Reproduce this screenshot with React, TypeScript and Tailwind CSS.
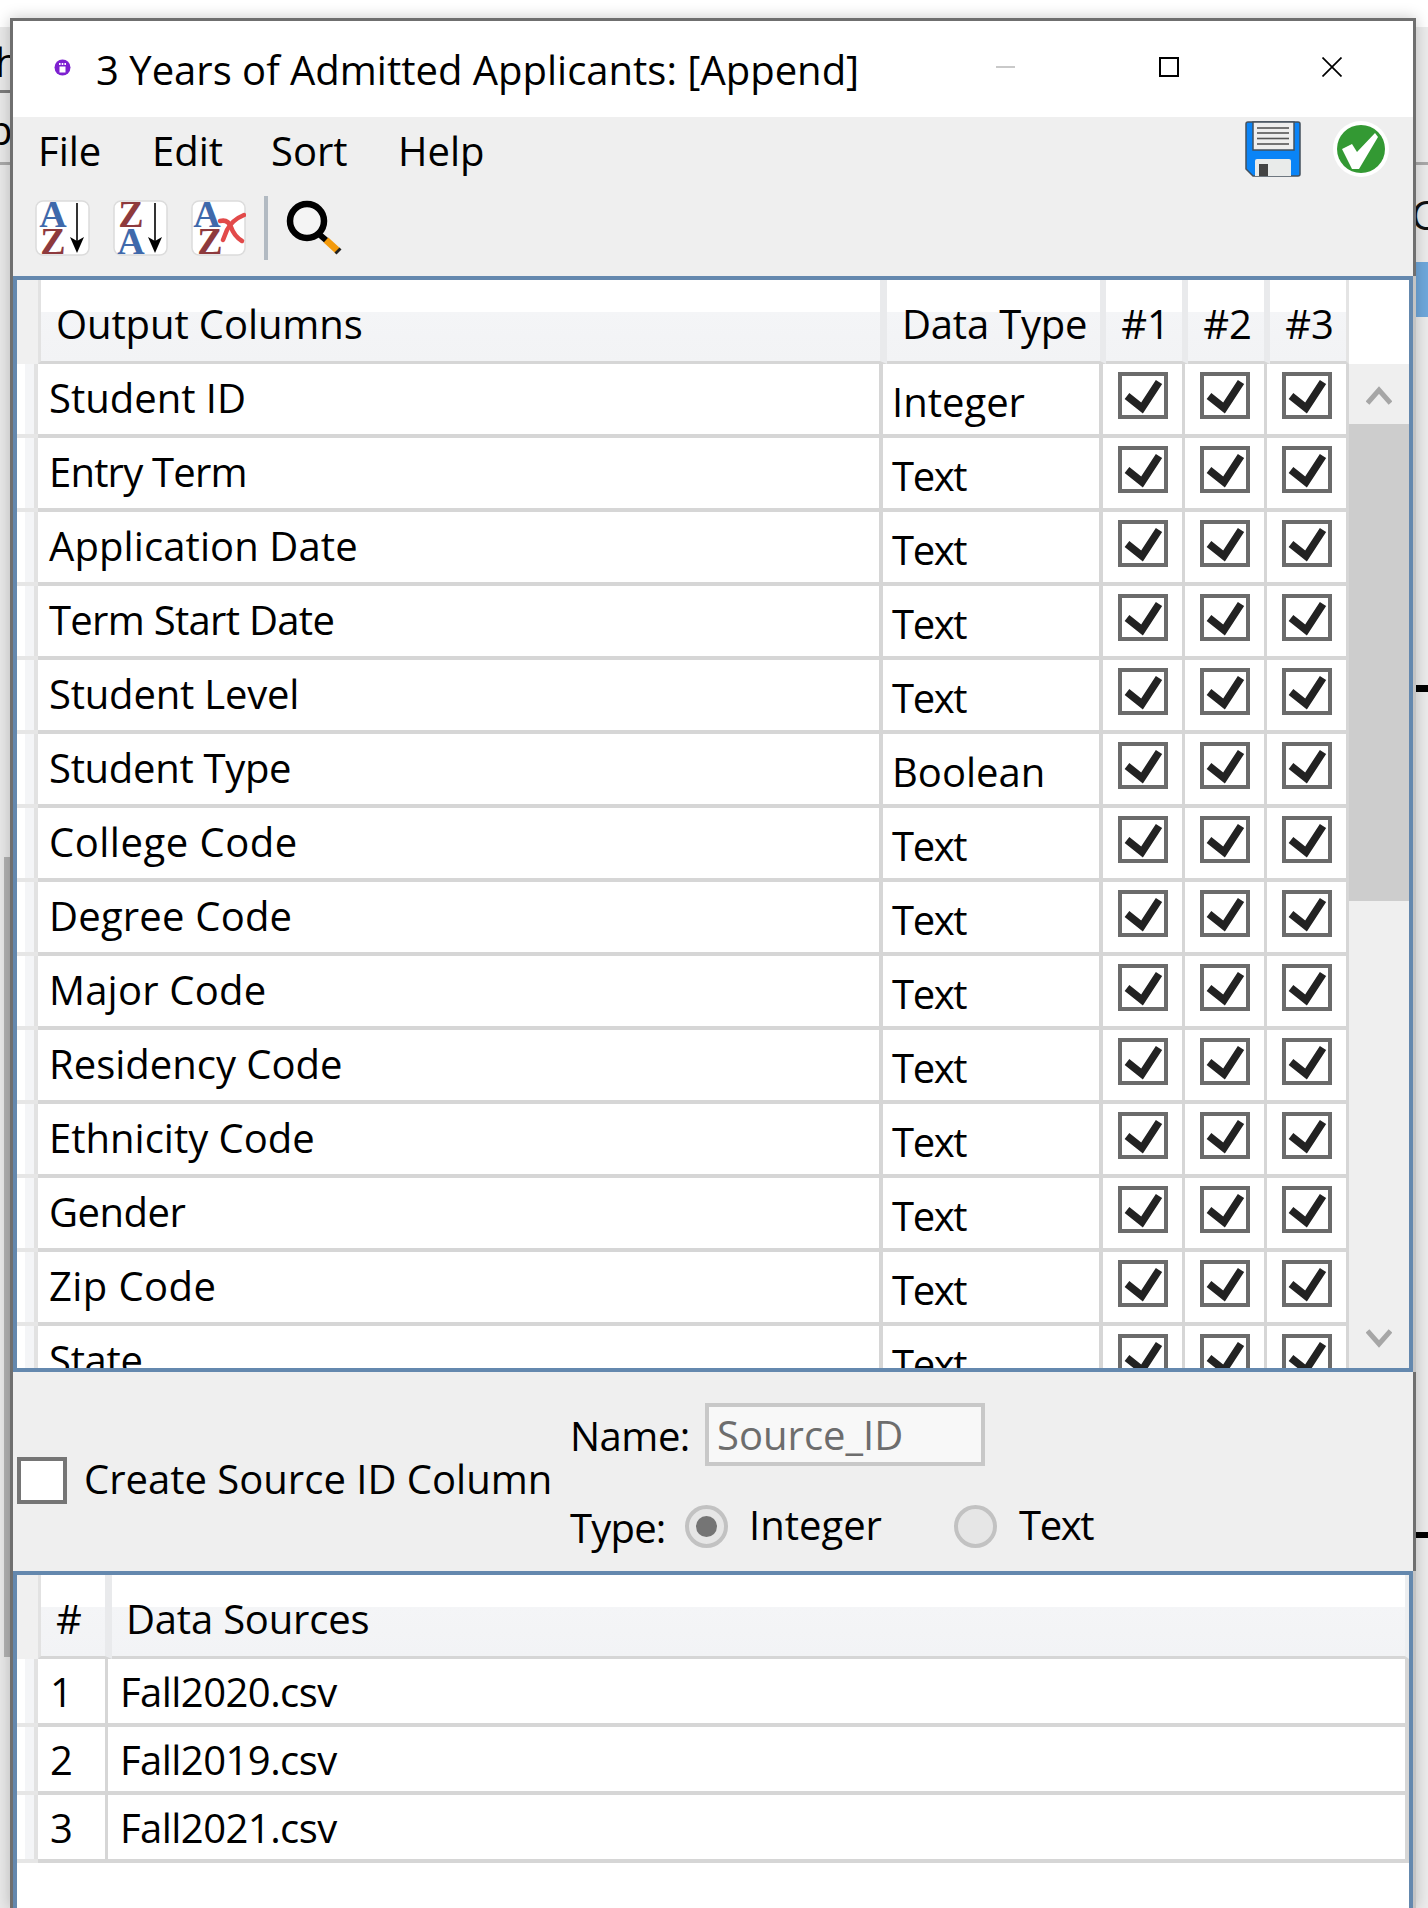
import React from "react";

const columns: [string, string, string][] = [
  ["Student ID", "Integer", ""],
  ["Entry Term", "Text", "tracking-[-0.8px]"],
  ["Application Date", "Text", "tracking-[0.1px]"],
  ["Term Start Date", "Text", "tracking-[-0.7px]"],
  ["Student Level", "Text", "tracking-[-0.2px]"],
  ["Student Type", "Boolean", "tracking-[-0.3px]"],
  ["College Code", "Text", "tracking-[0.5px]"],
  ["Degree Code", "Text", "tracking-[0.2px]"],
  ["Major Code", "Text", "tracking-[0.2px]"],
  ["Residency Code", "Text", ""],
  ["Ethnicity Code", "Text", ""],
  ["Gender", "Text", "tracking-[-0.5px]"],
  ["Zip Code", "Text", "tracking-[0.4px]"],
  ["State", "Text", "tracking-[-0.3px]"],
];

const sources = ["Fall2020.csv", "Fall2019.csv", "Fall2021.csv"];

const fontClass = "font-['Open_Sans','Noto_Sans',sans-serif] text-[40px] leading-[48px]";

function Check() {
  return (
    <svg width="50" height="47" viewBox="0 0 50 47" className="block">
      <rect x="2" y="2" width="46" height="43" fill="#fff" stroke="#6b6b6b" strokeWidth="4" />
      <path d="M9 24 L24 36 L41 10" fill="none" stroke="#222" strokeWidth="7.5" />
    </svg>
  );
}

function SortIcon({ top, bottom, topColor, bottomColor, cancel }: { top: string; bottom: string; topColor: string; bottomColor: string; cancel?: boolean }) {
  const f = { fontFamily: "'Liberation Serif', serif", fontWeight: 700, fontSize: 38 };
  return (
    <svg width="55" height="56" viewBox="0 0 55 56" className="block">
      <rect x="1" y="1" width="53" height="54" rx="7" fill="#fff" stroke="#dcdcdc" strokeWidth="1.5" />
      <text x={cancel ? 16 : 18} y="27" textAnchor="middle" fill={topColor} style={f}>{top}</text>
      <text x={cancel ? 19 : 18} y="54" textAnchor="middle" fill={bottomColor} style={f}>{bottom}</text>
      {cancel ? (
        <g fill="none" stroke="#e24a4a" strokeWidth="4.5" strokeLinecap="round">
          <path d="M29 21 Q37 19 40 27 Q43 36 51 41" />
          <path d="M53 15 Q41 20 36 30 Q34 35 32 40" />
        </g>
      ) : (
        <g>
          <line x1="42" y1="3" x2="42" y2="44" stroke="#000" strokeWidth="1.6" />
          <path d="M35 37 L42 41 L49 37 L42 53 Z" fill="#000" />
        </g>
      )}
    </svg>
  );
}

function Magnifier() {
  return (
    <svg width="64" height="60" viewBox="0 0 64 60" className="block">
      <circle cx="25" cy="23" r="17" fill="#f4f4f4" stroke="#000" strokeWidth="6.5" />
      <line x1="38" y1="37" x2="45" y2="43" stroke="#000" strokeWidth="6" />
      <line x1="44" y1="42" x2="56" y2="53" stroke="#f39a0c" strokeWidth="7" />
      <line x1="55" y1="52" x2="57" y2="54" stroke="#222" strokeWidth="7" />
    </svg>
  );
}

function SaveIcon() {
  return (
    <svg width="56" height="56" viewBox="0 0 56 56" className="block">
      <path d="M3 1 H53 Q55 1 55 3 V53 Q55 55 53 55 H8 L1 48 V3 Q1 1 3 1 Z" fill="#0a84f7" stroke="#44505c" strokeWidth="1.5" />
      <rect x="8" y="1" width="41" height="28" fill="#eeeeee" stroke="#44505c" strokeWidth="1.5" />
      <g stroke="#555" strokeWidth="1.6">
        <line x1="12" y1="7" x2="44" y2="7" />
        <line x1="12" y1="12" x2="44" y2="12" />
        <line x1="12" y1="17.5" x2="44" y2="17.5" />
        <line x1="12" y1="23" x2="44" y2="23" />
      </g>
      <path d="M10 55 V40 Q10 38 12 38 H44 Q46 38 46 40 V55 Z" fill="#e9ebea" />
      <rect x="14" y="43" width="9" height="12" fill="#444" />
    </svg>
  );
}

function OkIcon() {
  return (
    <svg width="56" height="56" viewBox="-28 -28 56 56" className="block">
      <circle r="28" fill="#fff" />
      <circle r="24" fill="#339933" />
      <path d="M-19 0 L-9 -5 L-4 3 L14 -16 L17 -12 L-2 20 L-9 20 Z" fill="#fff" />
    </svg>
  );
}

function Strip() {
  return (
    <div className="w-[21px] shrink-0 bg-[linear-gradient(to_right,#ffffff_38%,#f4f5f7_38%,#f4f5f7_80%,#e2e2e2_80%,#e2e2e2_100%)] border-b-4 border-[#e6e6e6]" />
  );
}

function Header({ className, children }: { className: string; children?: React.ReactNode }) {
  return (
    <div className={`flex items-center pt-[6px] bg-[linear-gradient(to_bottom,#ffffff_39%,#f4f5f7_39%,#f2f3f5_100%)] border-b-[3px] border-b-[#d6d6d6] ${className}`}>
      {children}
    </div>
  );
}

function Radio({ on }: { on?: boolean }) {
  return (
    <div className="w-[43px] h-[43px] rounded-full border-4 border-[#c2c2c2] bg-[#e6e6e6] flex items-center justify-center shrink-0">
      {on && <div className="w-[21px] h-[21px] rounded-full bg-[#757575]" />}
    </div>
  );
}

export default function App() {
  return (
    <div className={`relative w-[1428px] h-[1908px] overflow-hidden bg-white text-black pl-[10px] pt-[18px] ${fontClass}`}>
      {/* Windows behind the dialog */}
      <div className="absolute left-0 top-[27px] w-[10px] h-[1881px] bg-[#e9e9e9] overflow-hidden">
        <span className="absolute left-[-5px] top-[11px]">h</span>
        <span className="absolute left-[-12px] top-[79px]">p</span>
        <div className="absolute left-0 top-[63px] w-full h-[3px] bg-[#7b7b7b]" />
        <div className="absolute left-0 top-[135px] w-full h-[3px] bg-[#a9a9a9]" />
        <div className="absolute left-[4px] top-[830px] w-[6px] h-[800px] bg-[#b2b2b2]" />
      </div>
      <div className="absolute left-[1416px] top-[27px] w-[12px] h-[1881px] bg-[#ececec] overflow-hidden">
        <span className="absolute left-[-5px] top-[164px] text-[#111]">C</span>
        <div className="absolute left-0 top-[135px] w-full h-[3px] bg-[#a9a9a9]" />
        <div className="absolute left-0 top-[235px] w-full h-[55px] bg-[#6fa8dc]" />
        <div className="absolute left-0 top-[658px] w-full h-[7px] bg-black" />
        <div className="absolute left-0 top-[1505px] w-full h-[6px] bg-black" />
      </div>

      {/* Dialog */}
      <div className="relative w-[1406px] border-l-[3px] border-t-[3px] border-[#6f6f6f] shadow-[0_0_14px_rgba(0,0,0,0.22)] bg-white">
        {/* Title bar */}
        <div className="h-[96px] flex items-center bg-white border-r-[3px] border-[#6f6f6f]">
          <svg width="17" height="17" viewBox="0 0 17 17" className="ml-[41px] mb-[4px] shrink-0">
            <circle cx="8.5" cy="8.5" r="8" fill="#7d20d0" />
            <rect x="5.5" y="7.5" width="6" height="6" fill="#fff" />
            <rect x="5" y="4" width="1.6" height="2" fill="#fff" />
            <rect x="7.7" y="4" width="1.6" height="2" fill="#fff" />
            <rect x="10.4" y="4" width="1.6" height="2" fill="#fff" />
          </svg>
          <span className="ml-[25px] pt-[2px] whitespace-nowrap">3 Years of Admitted Applicants: [Append]</span>
          <div className="ml-auto flex pb-[4px]">
            <div className="w-[164px] flex justify-center">
              <div className="w-[19px] h-[2px] bg-[#c9c9c9] my-[9px]" />
            </div>
            <div className="w-[163px] flex justify-center">
              <div className="w-[20px] h-[20px] border-2 border-black" />
            </div>
            <div className="w-[163px] flex justify-center">
              <svg width="20" height="20" viewBox="0 0 20 20" className="block">
                <path d="M0.5 0.5 L19.5 19.5 M19.5 0.5 L0.5 19.5" stroke="#000" strokeWidth="1.7" fill="none" />
              </svg>
            </div>
          </div>
        </div>

        {/* Menu and toolbar */}
        <div className="h-[159px] bg-[#efefef] border-r-[3px] border-[#6f6f6f]">
          <div className="h-[79px] flex justify-between">
            <div className="flex pl-[25px] pt-[10px]">
              <span className="w-[114px]">File</span>
              <span className="w-[119px]">Edit</span>
              <span className="w-[127px]">Sort</span>
              <span>Help</span>
            </div>
            <div className="flex gap-[32px] pt-[4px] pr-[24px]">
              <SaveIcon />
              <OkIcon />
            </div>
          </div>
          <div className="flex items-start pl-[22px] gap-[23px]">
            <div className="pt-[4px]"><SortIcon top="A" bottom="Z" topColor="#3f69ab" bottomColor="#8e3a3d" /></div>
            <div className="pt-[4px]"><SortIcon top="Z" bottom="A" topColor="#8e3a3d" bottomColor="#3f69ab" /></div>
            <div className="pt-[4px]"><SortIcon top="A" bottom="Z" topColor="#3f69ab" bottomColor="#8e3a3d" cancel /></div>
            <div className="flex">
              <div className="w-[4px] h-[64px] bg-[#b2bac2] -ml-[5px]" />
              <div className="ml-[14px] pt-[2px]"><Magnifier /></div>
            </div>
          </div>
        </div>

        {/* Output columns table */}
        <div className="h-[1096px] border-r-[3px] border-[#c4c4c4]">
          <div className="h-full border-4 border-[#6488ae] bg-white overflow-hidden">
            <div className="flex h-[84px]">
              <div className="w-[21px] bg-[#f0f0f0]" />
              <Header className="w-[849px] pl-[15px] border-l-[3px] border-l-[#e2e2e2] border-r-[7px] border-r-[#e9eaec] tracking-[-0.1px]">Output Columns</Header>
              <Header className="w-[219px] pl-[15px] border-r-[6px] border-r-[#e9eaec] tracking-[-0.2px]">Data Type</Header>
              <Header className="w-[82px] justify-center pl-[3px] border-r-[6px] border-r-[#e9eaec]">#1</Header>
              <Header className="w-[82px] justify-center pl-[3px] border-r-[6px] border-r-[#e9eaec]">#2</Header>
              <Header className="w-[79px] justify-center pl-[3px] border-r-[3px] border-r-[#e4e4e4]">#3</Header>
              <div className="w-[60px] bg-white" />
            </div>
            <div className="flex h-[1004px] overflow-hidden">
              <div className="w-[1332px] shrink-0">
                {columns.map(([name, type, tracking]) => (
                  <div key={name} className="flex h-[74px]">
                    <Strip />
                    <div className="flex w-[1311px] border-b-4 border-[#d6d6d6] bg-white">
                      <div className={`w-[845px] pl-[11px] pt-[10px] border-r-4 border-[#d6d6d6] ${tracking}`}>{name}</div>
                      <div className={`w-[220px] pl-[9px] pt-[14px] border-r-4 border-[#d6d6d6] ${type === "Text" ? "tracking-[-1.4px]" : ""}`}>{type}</div>
                      {[1, 2, 3].map((n) => (
                        <div key={n} className="w-[82px] pl-[15px] pt-[8px] border-r-[3px] border-[#d6d6d6]">
                          <Check />
                        </div>
                      ))}
                    </div>
                  </div>
                ))}
              </div>
              <div className="w-[60px] bg-[#efefef] flex flex-col relative">
                <div className="h-[60px] flex justify-center pt-[22px]">
                  <svg width="26" height="19" viewBox="0 0 26 19" className="block">
                    <path d="M1.5 17 L13 4 L24.5 17" fill="none" stroke="#a6a6a6" strokeWidth="5" />
                  </svg>
                </div>
                <div className="h-[477px] bg-[#cdcdcd]" />
                <div className="flex-1 flex justify-center items-end pb-[20px]">
                  <svg width="26" height="19" viewBox="0 0 26 19" className="block">
                    <path d="M1.5 2 L13 15 L24.5 2" fill="none" stroke="#a6a6a6" strokeWidth="5" />
                  </svg>
                </div>
              </div>
            </div>
          </div>
        </div>

        {/* Source ID form */}
        <div className="h-[199px] flex bg-[#efefef] border-r-[3px] border-[#6f6f6f]">
          <div className="w-[557px] flex items-center pl-[4px] pt-[18px]">
            <div className="w-[50px] h-[47px] border-4 border-[#757575] bg-white shrink-0" />
            <span className="ml-[17px] pb-[4px] whitespace-nowrap">Create Source ID Column</span>
          </div>
          <div className="pt-[31px]">
            <div className="flex items-center h-[63px]">
              <span className="w-[135px] pt-[2px] tracking-[-0.5px]">Name:</span>
              <div className="w-[280px] h-[63px] border-4 border-[#c8c8c8] bg-[#f8f8f8] pl-[8px] flex items-center text-[#6d6d6d]">Source_ID</div>
            </div>
            <div className="flex items-center h-[43px] mt-[39px]">
              <span className="w-[115px] pt-[2px] tracking-[-0.8px]">Type:</span>
              <Radio on />
              <span className="ml-[21px] w-[205px] pb-[4px]">Integer</span>
              <Radio />
              <span className="ml-[22px] pb-[4px] tracking-[-1.4px]">Text</span>
            </div>
          </div>
        </div>

        {/* Data sources table */}
        <div className="h-[337px] border-r-[3px] border-[#c4c4c4]">
          <div className="h-full border-x-4 border-t-4 border-[#6488ae] bg-white">
            <div className="flex h-[84px]">
              <div className="w-[21px] bg-[#f0f0f0]" />
              <Header className="w-[74px] pl-[15px] border-l-[3px] border-l-[#e2e2e2] border-r-[7px] border-r-[#e9eaec]">#</Header>
              <Header className="flex-1 pl-[14px] border-r-[4px] border-r-[#eceef0] tracking-[-0.2px]">Data Sources</Header>
            </div>
            {sources.map((s, i) => (
              <div key={s} className="flex h-[68px]">
                <Strip />
                <div className="flex flex-1 border-b-4 border-[#d6d6d6]">
                  <div className="w-[70px] pl-[12px] pt-[9px] border-r-[3px] border-[#d6d6d6]">{i + 1}</div>
                  <div className="flex-1 pl-[12px] pt-[9px] border-r-4 border-[#d6d6d6] tracking-[-0.55px]">{s}</div>
                </div>
              </div>
            ))}
          </div>
        </div>
      </div>
    </div>
  );
}
